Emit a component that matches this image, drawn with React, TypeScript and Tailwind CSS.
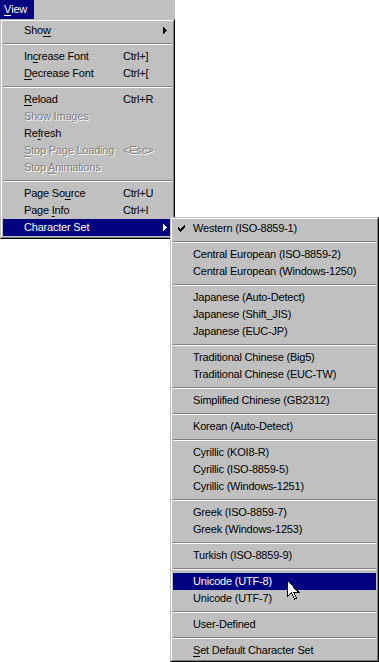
import type { ReactNode } from "react";

type Row =
    | { sep: true }
    | {
          sep?: false;
          label: string;
          shortcut?: string;
          disabled?: boolean;
          active?: boolean;
          submenu?: boolean;
          checked?: boolean;
      };

const viewItems: Row[] = [
    { label: "Sho&w", submenu: true },
    { sep: true },
    { label: "In&crease Font", shortcut: "Ctrl+]" },
    { label: "&Decrease Font", shortcut: "Ctrl+[" },
    { sep: true },
    { label: "&Reload", shortcut: "Ctrl+R" },
    { label: "Show Images", disabled: true },
    { label: "Re&fresh" },
    { label: "&Stop Page Loading", shortcut: "<Esc>", disabled: true },
    { label: "Stop &Animations", disabled: true },
    { sep: true },
    { label: "Page So&urce", shortcut: "Ctrl+U" },
    { label: "Page &Info", shortcut: "Ctrl+I" },
    { label: "Character Set", submenu: true, active: true },
];

const charsetItems: Row[] = [
    { label: "Western (ISO-8859-1)", checked: true },
    { sep: true },
    { label: "Central European (ISO-8859-2)" },
    { label: "Central European (Windows-1250)" },
    { sep: true },
    { label: "Japanese (Auto-Detect)" },
    { label: "Japanese (Shift_JIS)" },
    { label: "Japanese (EUC-JP)" },
    { sep: true },
    { label: "Traditional Chinese (Big5)" },
    { label: "Traditional Chinese (EUC-TW)" },
    { sep: true },
    { label: "Simplified Chinese (GB2312)" },
    { sep: true },
    { label: "Korean (Auto-Detect)" },
    { sep: true },
    { label: "Cyrillic (KOI8-R)" },
    { label: "Cyrillic (ISO-8859-5)" },
    { label: "Cyrillic (Windows-1251)" },
    { sep: true },
    { label: "Greek (ISO-8859-7)" },
    { label: "Greek (Windows-1253)" },
    { sep: true },
    { label: "Turkish (ISO-8859-9)" },
    { sep: true },
    { label: "Unicode (UTF-8)", active: true },
    { label: "Unicode (UTF-7)" },
    { sep: true },
    { label: "User-Defined" },
    { sep: true },
    { label: "&Set Default Character Set" },
];

// "&x" marks the mnemonic letter
function Label({ text }: { text: string }) {
    const i = text.indexOf("&");
    if (i < 0) return <>{text}</>;
    return (
        <>
            {text.slice(0, i)}
            <span className="underline underline-offset-[2px]">{text[i + 1]}</span>
            {text.slice(i + 2)}
        </>
    );
}

function Frame({ className, children }: { className: string; children: ReactNode }) {
    return (
        <div
            className={`bg-[#c0c0c0] border border-t-[#c0c0c0] border-l-[#c0c0c0] border-r-black border-b-black ${className}`}
        >
            <div className="border border-t-white border-l-white border-r-[#808080] border-b-[#808080] p-px">
                {children}
            </div>
        </div>
    );
}

function Separator() {
    return (
        <div className="h-[9px] pt-[4px]">
            <div className="border-t border-t-[#808080] border-b border-b-white" />
        </div>
    );
}

function Arrow({ white }: { white?: boolean }) {
    return (
        <svg width="4" height="7" viewBox="0 0 4 7" shapeRendering="crispEdges">
            <polygon points="0,0 4,3.5 0,7" fill={white ? "#fff" : "#000"} />
        </svg>
    );
}

function Check() {
    const px = [
        [6, 0], [5, 1], [6, 1], [0, 2], [4, 2], [5, 2], [6, 2],
        [0, 3], [1, 3], [3, 3], [4, 3], [5, 3],
        [0, 4], [1, 4], [2, 4], [3, 4], [4, 4],
        [1, 5], [2, 5], [3, 5], [2, 6],
    ];
    return (
        <svg width="7" height="7" viewBox="0 0 7 7" shapeRendering="crispEdges">
            {px.map(([x, y]) => (
                <rect key={`${x}-${y}`} x={x} y={y} width="1" height="1" fill="#000" />
            ))}
        </svg>
    );
}

function MenuRow({ row, wide }: { row: Exclude<Row, { sep: true }>; wide?: boolean }) {
    const tone = row.active
        ? "bg-[#000080] text-white"
        : row.disabled
          ? "text-[#808080] [text-shadow:1px_1px_0_#fff]"
          : "text-black";

    if (wide) {
        return (
            <div className={`flex items-center h-[17px] whitespace-nowrap ${tone}`}>
                <span className="w-[20px] pl-[5px] flex items-center">{row.checked && <Check />}</span>
                <span>
                    <Label text={row.label} />
                </span>
            </div>
        );
    }

    return (
        <div className={`flex items-center h-[17px] whitespace-nowrap ${tone}`}>
            <span className="w-[120px] pl-[21px]">
                <Label text={row.label} />
            </span>
            {row.shortcut && <span>{row.shortcut}</span>}
            {row.submenu && (
                <span className="ml-auto mr-[5px] flex items-center">
                    <Arrow white={row.active} />
                </span>
            )}
        </div>
    );
}

function MenuList({ rows, wide }: { rows: Row[]; wide?: boolean }) {
    return (
        <>
            {rows.map((row, i) =>
                row.sep ? <Separator key={i} /> : <MenuRow key={i} row={row} wide={wide} />
            )}
        </>
    );
}

function Cursor() {
    return (
        <svg width="13" height="20" viewBox="0 0 13 20" shapeRendering="crispEdges">
            <polygon
                points="0.5,0.5 0.5,16.5 4.5,12.5 7.5,19 9.5,18 6.5,12 11.5,12"
                fill="#fff"
                stroke="#000"
                strokeWidth="1"
                strokeLinejoin="miter"
            />
        </svg>
    );
}

export default function App() {
    return (
        <div className="relative w-[379px] h-[662px] bg-white overflow-hidden font-['Liberation_Sans',Arial,sans-serif] text-[11px] tracking-[-0.2px] leading-none text-black">
            <div className="w-[175px] h-[19px] bg-[#c0c0c0] flex">
                <span className="h-full w-[34px] bg-[#000080] text-white pl-[4px] flex items-center">
                    <Label text="&View" />
                </span>
            </div>

            <Frame className="w-[175px]">
                <MenuList rows={viewItems} />
            </Frame>

            <Frame className="absolute left-[170px] top-[217px] w-[209px]">
                <MenuList rows={charsetItems} wide />
            </Frame>

            <div className="absolute left-[287px] top-[580px]">
                <Cursor />
            </div>
        </div>
    );
}
